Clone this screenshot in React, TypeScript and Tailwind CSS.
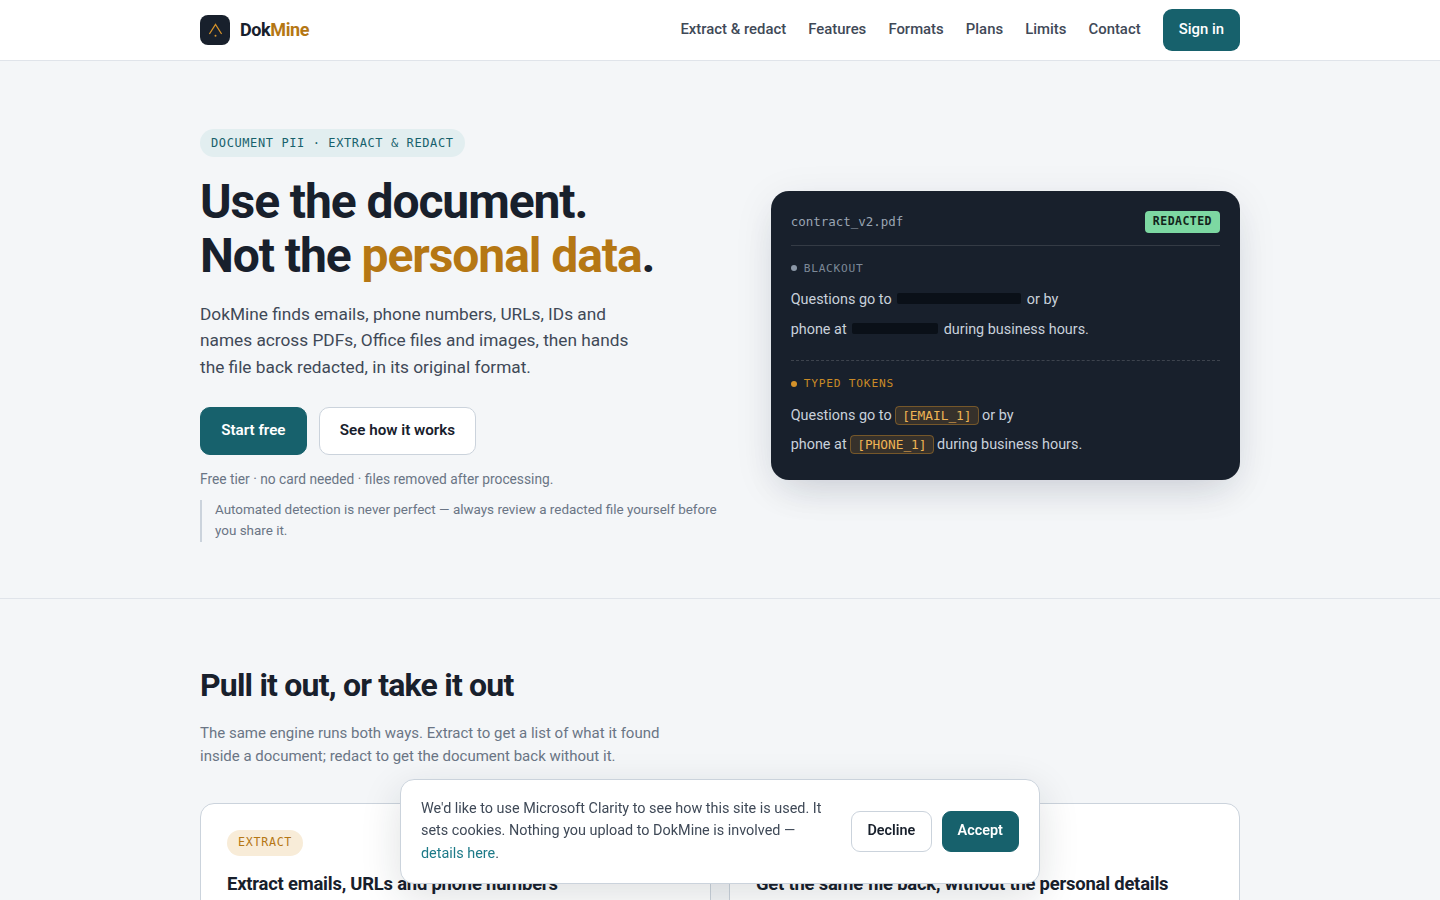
import React, { useState } from 'react';

const NAV_LINKS = ['Extract & redact', 'Features', 'Formats', 'Plans', 'Limits', 'Contact'];

const Token: React.FC<{ children: React.ReactNode }> = ({ children }) => (
  <span className="rounded-[4px] border border-[#d5922a]/40 bg-[#d5922a]/16 px-[6px] py-px font-['DejaVu_Sans_Mono',monospace] text-[12.8px] text-[#efb454]">
    {children}
  </span>
);

const Header: React.FC = () => (
  <header className="border-b border-[#e0e4ea] bg-white">
    <div className="mx-auto flex h-[60px] w-[1040px] items-center justify-between">
      <div className="flex items-center gap-2.5">
        <span className="flex h-[30px] w-[30px] items-center justify-center rounded-[8px] bg-[#18202c]">
          <svg width="30" height="30" viewBox="0 0 30 30" fill="none">
            <path d="M9.4 19 15.5 9.4 21.6 19" stroke="#d5922a" strokeWidth="1.3" />
            <circle cx="15.5" cy="20.8" r="1" fill="#d5922a" />
          </svg>
        </span>
        <span className="pb-0.5 text-[18px] font-bold tracking-[-0.021em] text-[#18202c]">
          Dok<span className="text-[#b57714]">Mine</span>
        </span>
      </div>
      <nav className="flex items-center gap-[22.12px] text-[14.88px] font-medium text-[#3f4957]">
        {NAV_LINKS.map((link) => (
          <a key={link} href="#" className="pb-0.5">{link}</a>
        ))}
        <a href="#" className="flex h-[42px] items-center rounded-[9px] bg-[#17616c] px-4 pb-0.5 text-white">Sign in</a>
      </nav>
    </div>
  </header>
);

const PreviewCard: React.FC = () => (
  <div className="rounded-[18px] bg-[#18202c] p-5 text-[14.4px] text-[#c9d1db] shadow-[0_18px_40px_-16px_rgba(24,32,60,0.16),0_8px_40px_rgba(24,32,60,0.08)]">
    <div className="flex h-[35px] items-start justify-between border-b border-white/12 font-['DejaVu_Sans_Mono',monospace]">
      <span className="text-[12.48px] leading-[22px] text-[#9aa5b3]">contract_v2.pdf</span>
      <span className="rounded-[4px] bg-[#7dd8a2] px-2 pb-px text-[11.52px] leading-[21px] font-bold tracking-[0.04em] text-[#12241b]">
        REDACTED
      </span>
    </div>

    <div className="border-b border-dashed border-white/16 pt-[14px] pb-[15px]">
      <div className="flex items-center gap-[7px] font-['DejaVu_Sans_Mono',monospace] text-[11.2px] leading-[18px] tracking-[0.065em] text-[#7d8998]">
        <span className="mb-px h-1.5 w-1.5 rounded-full bg-[#8b97a7]"></span>
        BLACKOUT
      </div>
      <p className="mt-[7px] leading-[30px]">
        Questions go to <span className="mx-[2px] inline-block h-[11px] w-[124px] rounded-[2px] bg-[#0a1018]"></span> or by
        <br />
        phone at <span className="mx-[2px] inline-block h-[11px] w-[86px] rounded-[2px] bg-[#0a1018]"></span> during business hours.
      </p>
    </div>

    <div className="pt-[14px] pb-px">
      <div className="flex items-center gap-[7px] font-['DejaVu_Sans_Mono',monospace] text-[11.2px] leading-[18px] tracking-[0.07em] text-[#c98a26]">
        <span className="h-1.5 w-1.5 rounded-full bg-[#d5922a]"></span>
        TYPED TOKENS
      </div>
      <p className="mt-2 leading-[29px]">
        Questions go to <Token>[EMAIL_1]</Token> or by
        <br />
        phone at <Token>[PHONE_1]</Token> during business hours.
      </p>
    </div>
  </div>
);

const Hero: React.FC = () => (
  <section className="border-b border-[#e0e4ea] pt-[68px] pb-14">
    <div className="mx-auto grid w-[1040px] grid-cols-[1fr_469.3px] items-center gap-8">
      <div>
        <div className="flex">
          <span className="rounded-full bg-[#e2eef0] px-[11px] font-['DejaVu_Sans_Mono',monospace] text-[12px] leading-[28px] tracking-[0.05em] text-[#17616c]">
            DOCUMENT PII · EXTRACT &amp; REDACT
          </span>
        </div>
        <h1 className="mt-[18px] text-[48px] leading-[53.76px] font-bold tracking-[-0.0225em] text-[#18202c]">
          Use the document.
          <br />
          Not the <span className="text-[#b57714]">personal data</span>.
        </h1>
        <p className="mt-[18px] max-w-[450px] text-[17.28px] leading-[26.6px] text-[#3f4957]">
          DokMine finds emails, phone numbers, URLs, IDs and names across PDFs, Office files and images, then hands the
          file back redacted, in its original format.
        </p>
        <div className="mt-[26.7px] flex gap-3 text-[15.2px] font-semibold">
          <a href="#" className="flex h-12 items-center rounded-[10px] border border-[#17616c] bg-[#17616c] px-[20.2px] pb-px text-white">
            Start free
          </a>
          <a href="#" className="flex h-12 items-center rounded-[10px] border border-[#cbd3dc] bg-white px-[20.1px] pb-px text-[#18202c]">
            See how it works
          </a>
        </div>
        <p className="mt-[13px] text-[13.76px] leading-[22px] text-[#6a7585]">
          Free tier · no card needed · files removed after processing.
        </p>
        <p className="mt-2.5 border-l-2 border-[#cbd3dc] pl-[13px] text-[13.44px] leading-[20.9px] text-[#6a7585]">
          Automated detection is never perfect — always review a redacted file yourself before you share it.
        </p>
      </div>
      <PreviewCard />
    </div>
  </section>
);

const ModeCard: React.FC<{ label: string; title: string; badge: string }> = ({ label, title, badge }) => (
  <div className="h-[260px] rounded-[14px] border border-[#cbd3dc] bg-white p-[26px]">
    <div className="flex">
      <span className={`rounded-full px-[11px] pb-0.5 font-['DejaVu_Sans_Mono',monospace] text-[11.68px] leading-[24px] tracking-[0.06em] ${badge}`}>
        {label}
      </span>
    </div>
    <h3 className="mt-[14px] text-[18.4px] leading-7 font-bold tracking-[-0.011em] text-[#18202c]">{title}</h3>
  </div>
);

const Modes: React.FC = () => (
  <section className="mx-auto w-[1040px] pt-[67px]">
    <h2 className="text-[32px] leading-[38px] font-bold tracking-[-0.025em] text-[#18202c]">Pull it out, or take it out</h2>
    <p className="mt-[18.4px] max-w-[480px] text-[15px] leading-[23px] text-[#6a7585]">
      The same engine runs both ways. Extract to get a list of what it found inside a document; redact to get the
      document back without it.
    </p>
    <div className="mt-[34.6px] grid grid-cols-2 gap-[18px]">
      <ModeCard label="EXTRACT" title="Extract emails, URLs and phone numbers" badge="bg-[#f8ecd8] text-[#b57714]" />
      <ModeCard label="REDACT" title="Get the same file back, without the personal details" badge="bg-[#e2eef0] text-[#17616c]" />
    </div>
  </section>
);

const CookieBanner: React.FC<{ onClose: () => void }> = ({ onClose }) => (
  <div className="fixed bottom-4 left-1/2 flex w-[640px] -translate-x-1/2 items-center justify-between rounded-[14px] border border-[#cbd3dc] bg-white px-5 py-[18px] text-[14.4px] shadow-[0_12px_40px_rgba(24,32,44,0.14)]">
    <p className="w-[410px] leading-[22.32px] text-[#3f4957]">
      We'd like to use Microsoft Clarity to see how this site is used. It sets cookies. Nothing you upload to DokMine is
      involved — <a href="#" className="text-[#1d7a88]">details here</a>.
    </p>
    <div className="flex gap-2.5 font-semibold">
      <button onClick={onClose} className="h-[41px] rounded-[9px] border border-[#cbd3dc] bg-white px-[15.2px] pb-0.5 text-[#18202c]">
        Decline
      </button>
      <button onClick={onClose} className="h-[41px] rounded-[9px] border border-[#17616c] bg-[#17616c] px-[15.1px] pb-0.5 text-white">
        Accept
      </button>
    </div>
  </div>
);

const App: React.FC = () => {
  const [showBanner, setShowBanner] = useState(true);

  return (
    <div className="h-screen overflow-hidden bg-[#f4f6f8] font-[Roboto,sans-serif] text-[#18202c]">
      <Header />
      <main>
        <Hero />
        <Modes />
      </main>
      {showBanner && <CookieBanner onClose={() => setShowBanner(false)} />}
    </div>
  );
};

export default App;
